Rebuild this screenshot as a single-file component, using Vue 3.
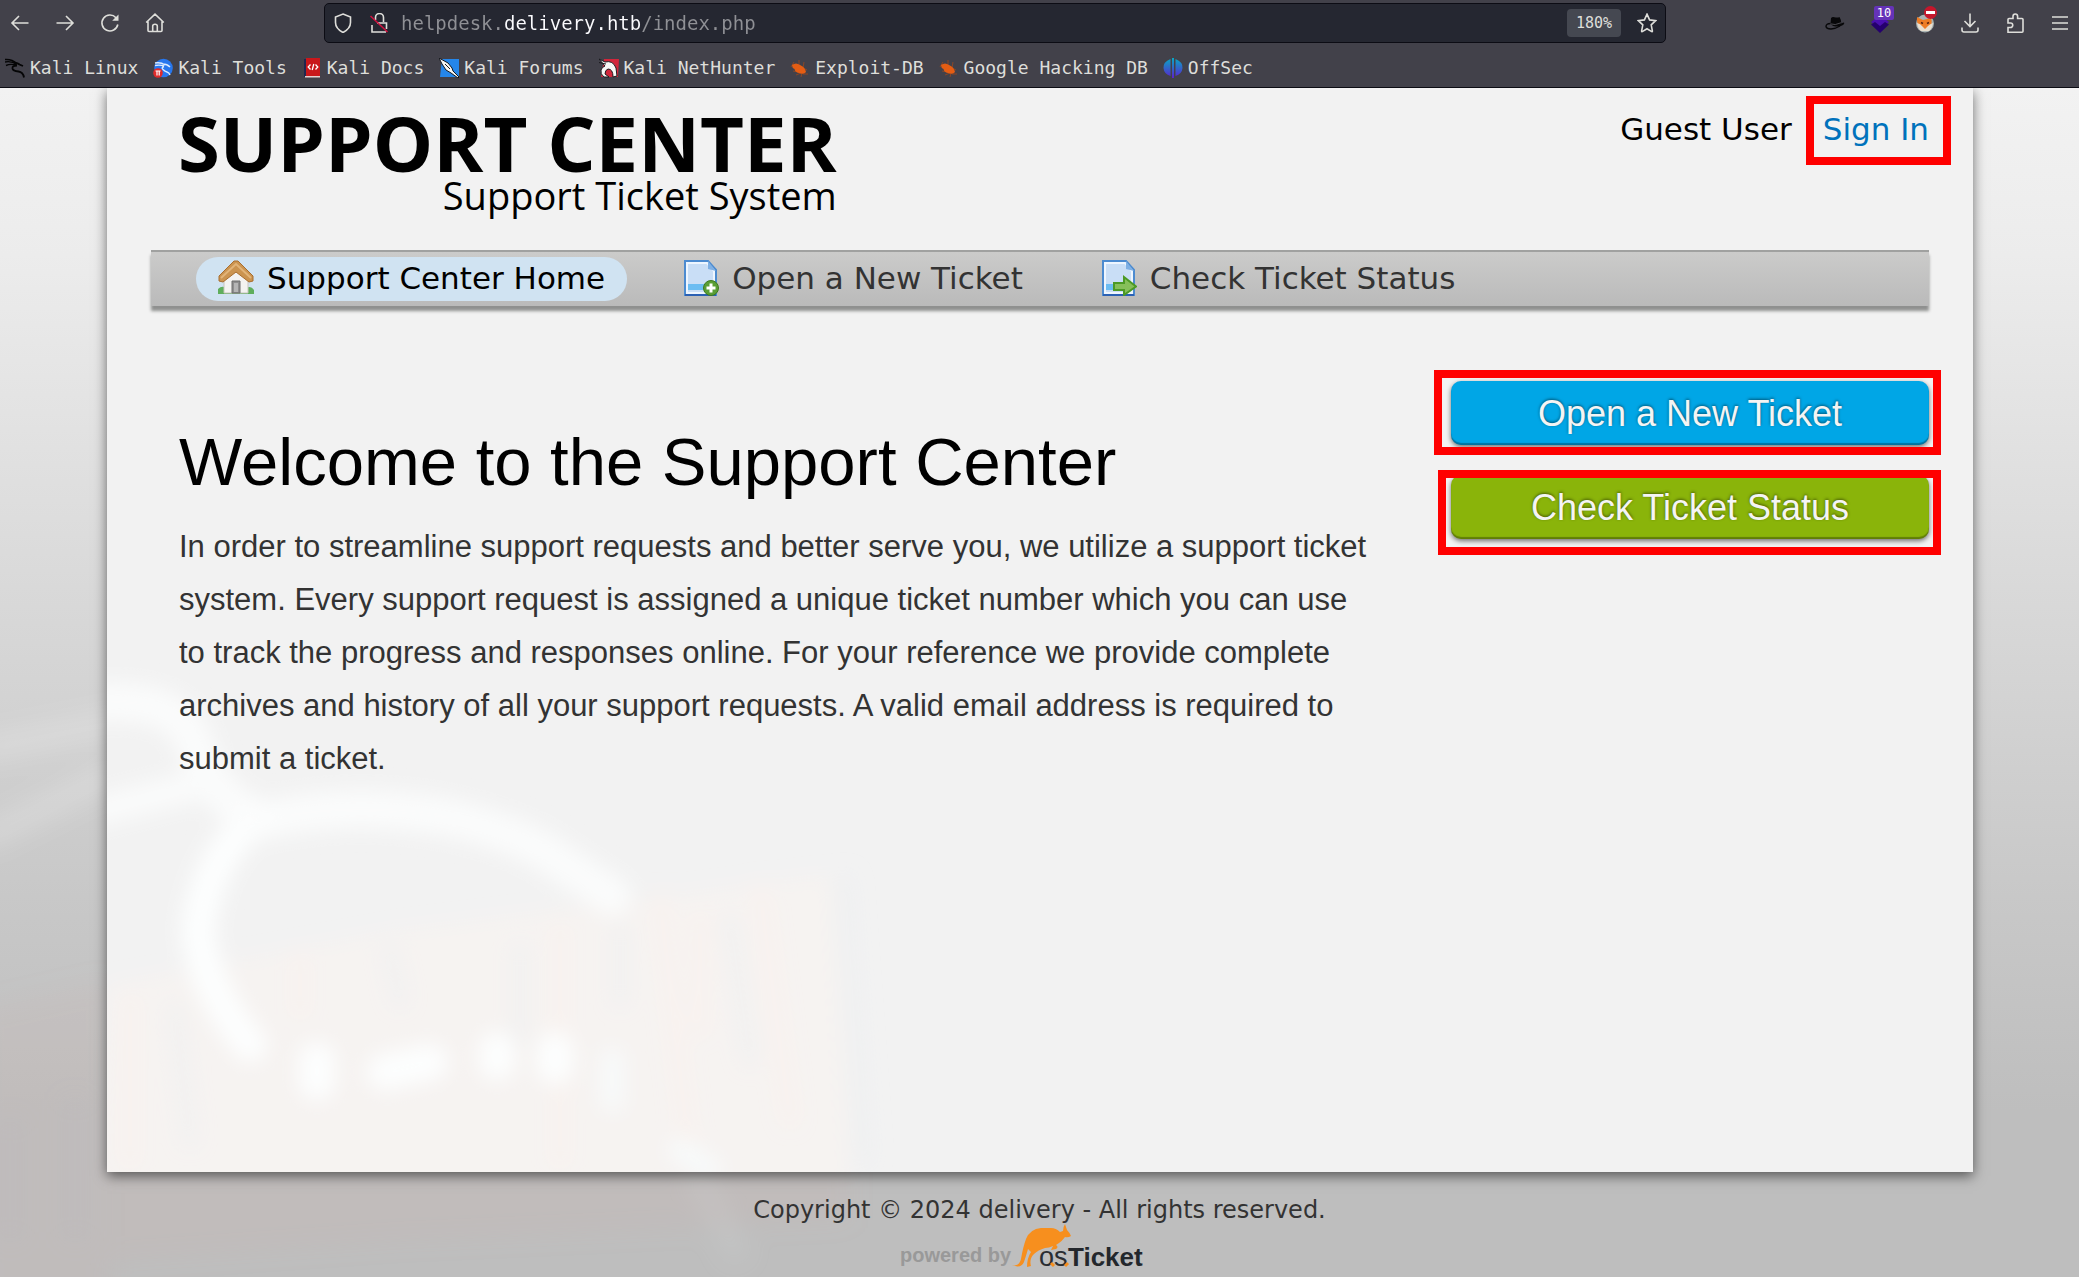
<script setup>
import { ref } from 'vue'

const address = ref('helpdesk.delivery.htb/index.php')

const bookmarks = [
  { id: 'kali', label: 'Kali Linux' },
  { id: 'tools', label: 'Kali Tools' },
  { id: 'docs', label: 'Kali Docs' },
  { id: 'forums', label: 'Kali Forums' },
  { id: 'nethunter', label: 'Kali NetHunter' },
  { id: 'bug', label: 'Exploit-DB' },
  { id: 'bug', label: 'Google Hacking DB' },
  { id: 'offsec', label: 'OffSec' },
]

const tabs = [
  { id: 'home', label: 'Support Center Home', active: true },
  { id: 'new', label: 'Open a New Ticket', active: false },
  { id: 'status', label: 'Check Ticket Status', active: false },
]
</script>

<template>
  <div class="browser">
    <header class="chrome">
      <div class="toolbar">
        <div class="history">
          <button type="button" aria-label="Back">
            <svg viewBox="0 0 20 20"><path d="M18.500 10H2M9 3 2 10l7 7" /></svg>
          </button>
          <button type="button" aria-label="Forward">
            <svg viewBox="0 0 20 20"><path d="M1.500 10H18M11 3l7 7-7 7" /></svg>
          </button>
          <button type="button" aria-label="Reload">
            <svg viewBox="0 0 20 20"><path d="M17.800 11.500A8 8 0 1 1 16 4.700" /><path d="M18.500 1.500v6.300h-6.300z" fill="currentColor" stroke="none" /></svg>
          </button>
          <button type="button" aria-label="Home">
            <svg viewBox="0 0 20 20"><path d="M1.200 9.500 10 1.200l8.800 8.300M3 8.500V17.500q0 1 1 1h12q1 0 1-1V8.500M7.700 18.500V13q0-1.800 2.300-1.800T12.300 13v5.500" /></svg>
          </button>
        </div>

        <form class="urlbar" @submit.prevent>
          <svg class="glyph" viewBox="0 0 20 20"><path d="M10 1 17.500 4v5.500q0 6-7.500 10-7.500-4-7.500-10V4z" /></svg>
          <svg class="glyph" viewBox="0 0 20 20">
            <path d="M6.500 7V4.500a4 4 0 0 1 8 0V9M3 12v7h14M8 10h9.500v6" />
            <path d="M1.500 3 18.500 19" stroke="#d3123f" />
          </svg>
          <input v-model="address" type="text" aria-label="Address" spellcheck="false" />
          <button type="button" class="zoom">180%</button>
          <button type="button" class="star" aria-label="Bookmark this page">
            <svg viewBox="0 0 20 20"><path d="m10 1.200 2.600 5.700 6.100.7-4.500 4.200 1.200 6.300q0 .8-.7.500L10 15.700l-4.700 2.900q-.7.300-.7-.5l1.200-6.300-4.500-4.200 6.100-.7z" /></svg>
          </button>
        </form>

        <div class="extensions">
          <button type="button" aria-label="Hat extension">
            <svg viewBox="0 0 20 20">
              <path d="M5.500 11 6 5.200q1-1.700 3.500-1 3 .8 5-.2 1.500 2 1.800 6.500 3-1.500 3-.5 0 2-5 3.500Q8 14 5.500 11z" fill="#08080a" stroke="none" />
              <path d="M5 10.800q5 2 11-1" stroke="#4b4a50" stroke-width="1" />
              <path d="M5.500 10.500Q1 10.500 1 13.500q.5 2.500 5 2.500 5-.5 9-3" stroke="#08080a" stroke-width="1.400" />
            </svg>
          </button>
          <button type="button" aria-label="Layers extension">
            <svg viewBox="0 0 20 20">
              <path d="m10 2 9 7-9 7-9-7z" fill="#4a0fb0" stroke="none" />
              <path d="M1 11.500 5 9l5 4 5-4 4 2.500L10 20z" fill="#25006e" stroke="none" />
            </svg>
            <span class="count">10</span>
          </button>
          <button type="button" aria-label="Proxy extension">
            <svg viewBox="0 0 20 20">
              <circle cx="10" cy="10.500" r="9" fill="#a9b3b3" stroke="none" />
              <path d="M2 4 8 7l8-2q2 6-2 10l-4 3-4-3Q1 11 2 4z" fill="#ee7d26" stroke="none" />
              <path d="M2 10q4 1 5 3l3 3 3-3q2-2 5-3-1 6-4 8H6q-3-2-4-8z" fill="#e9dfd0" stroke="none" />
              <path d="m6 9.500 2 1M14 9.500l-2 1" stroke="#5a2410" />
            </svg>
            <span class="blocked"></span>
          </button>
          <button type="button" aria-label="Downloads">
            <svg viewBox="0 0 20 20"><path d="M10 .500V13M4.500 8l5.500 5.500L15.500 8M2 14.500v2.500q0 2 2 2h12q2 0 2-2v-2.500" /></svg>
          </button>
          <button type="button" aria-label="Extensions">
            <svg viewBox="0 0 20 20"><path d="M3 19.200v-4.700h2.500a2 2 0 0 0 0-4.500H3V6.500q0-1 1-1h4V3.300a2.300 2.300 0 0 1 4.600 0v2.200H17q1 0 1 1v11.700q0 1-1 1z" /></svg>
          </button>
          <button type="button" aria-label="Menu">
            <svg viewBox="0 0 20 20"><path d="M2 4h16M2 10h16M2 16h16" /></svg>
          </button>
        </div>
      </div>

      <nav class="bookmarks" aria-label="Bookmarks">
        <a v-for="mark in bookmarks" :key="mark.label" href="#">
          <svg v-if="mark.id === 'kali'" viewBox="0 0 20 20" fill="none" stroke="#050506">
            <path d="M0 1.500q7-.5 12 4M0 4q6-1.500 12 2.500M1 7.500q4-2 10-.5" stroke-width="1.400" />
            <path d="M10 5q3 0 4.500 1.500L18 8M12 7.500q-5 0-4.500 3 .5 2.500 6 3 4.500.5 5.500 6" stroke-width="1.800" />
          </svg>
          <svg v-else-if="mark.id === 'tools'" viewBox="0 0 20 20" fill="none">
            <circle cx="10.500" cy="10" r="9.300" fill="#2777ee" />
            <path d="M2 5q6-1 10 2M2 7.500q5-1 9 .5M10 6q4 0 7 3M11 8.500q-3 1-1 3t4 2.500 3 3" stroke="#dcebff" stroke-width="1.400" />
            <circle cx="5" cy="15" r="4.800" fill="#e02b2b" />
            <path d="M2.500 13h5M4 13v4.500M6.200 13v4.500" stroke="#fff" stroke-width="1.200" />
          </svg>
          <svg v-else-if="mark.id === 'docs'" viewBox="0 0 20 20" fill="none">
            <path d="M2 1h3v18H2z" fill="#20274f" />
            <path d="M4 0h14v18H4z" fill="#c9171b" />
            <path d="M3 18h15v1.500H3z" fill="#e6cfcf" />
            <path d="m8.500 6.500-2.300 2.500 2.300 2.500M13.500 6.500l2.300 2.500-2.300 2.500M11.800 6l-1.600 6" stroke="#fff" stroke-width="1.300" />
          </svg>
          <svg v-else-if="mark.id === 'forums'" viewBox="0 0 20 20">
            <path d="M3 1h17v18H1z" fill="#2586ea" />
            <path d="m0 0 9 5 4 5 1 3 6 6-1 1-7-5-5-3-4-6z" fill="#f6f6f4" stroke="#15171c" stroke-width="1" />
            <path d="m6 6 5 5" stroke="#15171c" />
          </svg>
          <svg v-else-if="mark.id === 'nethunter'" viewBox="0 0 20 20" fill="none">
            <path d="M5 1h15l-1 18H2z" fill="#d2263b" />
            <path d="m0 1 6 3q8-2 11 6l1 8-4 1q0-8-5-8-3 1-3 5l4 3H5q-4-3-3-7 1-3 4-4z" fill="#f7f7f5" stroke="#1a1a1e" />
            <path d="M0 4.500 7 6" stroke="#1a1a1e" />
          </svg>
          <svg v-else-if="mark.id === 'bug'" viewBox="0 0 20 20" fill="none">
            <path d="M4 4 1 9M9 2v5M14 4l-1 6M17 12l-4-2M18 16h-5M3 13l5 1M6 17l5-2M11 19l1-4" stroke="#8a4726" stroke-width="1" />
            <path d="M2 7q4-3 8 0 5 2 6 7-2 3-7 1-4-1-4.500-4Q2 10 2 7z" fill="#e55d13" />
          </svg>
          <svg v-else viewBox="0 0 20 20">
            <defs>
              <linearGradient id="offsec-fade" x1="0" y1="0" x2="0" y2="1">
                <stop offset="0" stop-color="#08a9c4" />
                <stop offset="1" stop-color="#5a22cf" />
              </linearGradient>
            </defs>
            <path d="M7.500 1v17Q1 16 .5 10T7.500 1zM12.500 1v17q6.500-2 7-8t-7-9zM9 0h2v20H9z" fill="url(#offsec-fade)" />
          </svg>
          <span>{{ mark.label }}</span>
        </a>
      </nav>
    </header>

    <div class="page">
      <svg class="backdrop" viewBox="0 0 1000 637" aria-hidden="true">
        <defs>
          <filter id="haze" x="-20%" y="-20%" width="140%" height="140%"><feGaussianBlur stdDeviation="12" /></filter>
        </defs>
        <g filter="url(#haze)" fill="none">
          <path d="M-20 200 120 130M-20 110 130 80" stroke="#fff" stroke-opacity=".2" stroke-width="26" />
          <path d="M-20 370 110 340V660H-20z" fill="#d0b0a4" fill-opacity=".12" />
          <path d="M110 530H850V580L400 600 110 620z" fill="#d8a89a" fill-opacity=".1" />
          <path d="M10 480V600M75 460V600" stroke="#b4babf" stroke-opacity=".2" stroke-width="20" />
          <path d="M690 520 740 620" stroke="#dfe2e2" stroke-opacity=".15" stroke-width="22" />
        </g>
      </svg>

      <div class="card">
        <svg class="watermark" viewBox="107 640 1000 532" aria-hidden="true">
          <defs>
            <filter id="soft" x="-20%" y="-20%" width="140%" height="140%"><feGaussianBlur stdDeviation="10" /></filter>
          </defs>
          <g filter="url(#soft)" fill="none" stroke-linecap="round">
            <path d="M107 985 400 930 600 905 830 875 850 1190H90z" fill="#fff4f0" fill-opacity=".3" />
            <path d="M130 1000V1160M300 960V1010M560 930V1160M660 900 690 1160M760 890 790 1120M700 920V1030" stroke="#ffeee8" stroke-opacity=".3" stroke-width="16" />
            <path d="M175 1010 190 1140M390 950 400 1000M520 950V1040M730 920 750 1060M845 880 865 1160M620 930V1000" stroke="#eceeef" stroke-opacity=".5" stroke-width="14" />
            <path d="M255 819Q205 860 198 932 205 990 250 1045" stroke="#fdfefe" stroke-width="34" />
            <path d="M70 705Q180 690 195 745 215 805 265 820 350 800 446 817 500 828 542 850L612 896" stroke="#fcfdfd" stroke-opacity=".9" stroke-width="38" />
            <path d="M80 815 200 785" stroke="#fafbfb" stroke-width="30" />
            <path d="M317 1060V1082M385 1072 430 1062M497 1050V1062M555 1050V1066" stroke="#fdfefe" stroke-width="36" />
            <path d="M612 1060V1100M680 1150 710 1170" stroke="#f8fafa" stroke-width="24" />
          </g>
        </svg>

        <header class="masthead">
          <a class="logo" href="#">
            <span class="logo-title">SUPPORT CENTER</span>
            <span class="logo-tagline">Support Ticket System</span>
          </a>
          <p class="account">
            <span>Guest User</span>
            <a href="#">Sign In<i class="mark mark-signin"></i></a>
          </p>
        </header>

        <nav class="tabs" aria-label="Support center">
          <a v-for="tab in tabs" :key="tab.id" href="#" :class="{ active: tab.active }">
            <svg v-if="tab.id === 'home'" viewBox="0 0 36 36">
              <path d="M0 29q4-4 8-1h20q5-3 8 2v4H0z" fill="#5fae5c" />
              <path d="M6 16 18 5l12 11v17H6z" fill="#f4f3f1" stroke="#c9c4be" />
              <path d="M14 21h8v12h-8z" fill="#8f8f8f" stroke="#6d6d6d" />
              <path d="M16 23h4v9h-4z" fill="#b5b5b5" />
              <path d="M16 1h4l15 15v5l-4 1L18 12 5 22l-4-1v-5z" fill="#cb9450" stroke="#a96e2e" />
              <path d="M3 18 18 4l15 14" fill="none" stroke="#e2b478" stroke-width="2" />
            </svg>
            <svg v-else viewBox="0 0 36 36">
              <path d="M2 1h23l8 9v25H2z" fill="#c9def6" stroke="#4c8bd0" stroke-width="2" />
              <path d="M4 3h20l7 8v22H4z" fill="none" stroke="#eef6ff" stroke-width="2" />
              <path d="M5 24h25v6H5z" fill="#6cbdf2" />
              <path d="M2 35h31" stroke="#2b61b4" stroke-width="2" />
              <path d="M25 1v8l8 2z" fill="#7fb0e4" />
              <template v-if="tab.id === 'new'">
                <circle cx="28" cy="28" r="7.500" fill="#5a9e35" stroke="#3d7a1f" />
                <path d="M28 23.500v9M23.500 28h9" stroke="#fff" stroke-width="3" />
              </template>
              <path v-else d="M13 23h10v-6l12 9.500L23 35v-5H13z" fill="#86bf5a" stroke="#4c9a25" stroke-width="2" />
            </svg>
            <span>{{ tab.label }}</span>
          </a>
        </nav>

        <main class="content">
          <section class="welcome">
            <h1>Welcome to the Support Center</h1>
            <p>
              In order to streamline support requests and better serve you, we utilize a support ticket
              system. Every support request is assigned a unique ticket number which you can use to track
              the progress and responses online. For your reference we provide complete archives and
              history of all your support requests. A valid email address is required to submit a ticket.
            </p>
          </section>
          <aside class="actions">
            <a class="action blue" href="#">Open a New Ticket<i class="mark mark-open"></i></a>
            <a class="action green" href="#">Check Ticket Status<i class="mark mark-check"></i></a>
          </aside>
        </main>
      </div>

      <footer class="footer">
        <p>Copyright © 2024 delivery - All rights reserved.</p>
        <a href="#" aria-label="powered by osTicket">
          <svg viewBox="0 0 280 44">
            <text x="0" y="38" class="powered">powered by</text>
            <path
              d="M112 41q7 2 9-6 2-12 5-20 4-10 15-11h10q5 0 9 4l3-1q0-4 2-7l2 6q3 3 4 6-3 2-6 1-3 4-6 6l-3 2q3 2 0 4l-5 1 2-4q-4 2-8 2-7 2-11 6-5 5-3 12l-4 1q0-9 4-15l-3-3q-2 7-4 13-3 7-12 3z"
              fill="#f78f1e"
            />
            <text x="139" y="42" class="os">os</text>
            <text x="168" y="42" class="ticket">Ticket</text>
            <path d="M151 39l3 3M168 39l-3 3" stroke="#f78f1e" stroke-width="3" />
          </svg>
        </a>
      </footer>
    </div>
  </div>
</template>

<style>
body {
  margin: 0;
}
</style>

<style scoped>
.browser {
  display: flex;
  flex-direction: column;
  min-height: 100vh;
  font-family: "DejaVu Sans", sans-serif;
  color: #000;
}

a {
  color: inherit;
  text-decoration: none;
}

p,
h1 {
  margin: 0;
}

button {
  padding: 0;
  border: 0;
  background: none;
  color: inherit;
  font: inherit;
}

/* Browser chrome */
.chrome {
  background: #42414a;
  border-bottom: 1px solid #0c0c14;
  color: #dededa;
  font-family: "DejaVu Sans Mono", monospace;
}

.toolbar {
  display: flex;
  align-items: center;
  height: 46px;
  padding: 0 9px 0 10px;
}

.toolbar svg {
  display: block;
  width: 20px;
  height: 20px;
  fill: none;
  stroke: currentColor;
  stroke-width: 1.6;
}

.history,
.extensions {
  display: flex;
  gap: 25px;
}

.urlbar {
  display: flex;
  flex: 1;
  align-items: center;
  gap: 16px;
  box-sizing: border-box;
  height: 40px;
  margin: 0 159px;
  padding: 0 8px;
  border: 1px solid #0c0c14;
  border-radius: 5px;
  background: #252731;
}

.urlbar input {
  flex: 1;
  min-width: 0;
  margin-left: -4px;
  padding: 0;
  border: 0;
  outline: 0;
  font: 19px/36px "DejaVu Sans Mono", monospace;
  color: transparent;
  background: linear-gradient(90deg, #8f9095 9ch, #fbfbfe 9ch 21ch, #8f9095 21ch);
  -webkit-background-clip: text;
  background-clip: text;
}

.zoom {
  height: 28px;
  padding: 0 9px;
  border-radius: 4px;
  background: #454851;
  font-size: 15px;
}

.extensions button {
  position: relative;
}

.count,
.blocked {
  position: absolute;
  top: -7px;
  left: 4px;
  width: 20px;
  height: 14px;
  border-radius: 2px;
  background: #6533b8;
  color: #fff;
  font-size: 12px;
  line-height: 14px;
}

.blocked {
  left: 9px;
  width: 13px;
  height: 13px;
  border-radius: 50%;
  background: linear-gradient(#fff, #fff) center / 9px 3px no-repeat #c4172c;
}

.bookmarks {
  display: flex;
  gap: 15px;
  height: 38px;
  padding: 3px 5px 0;
  font-size: 18px;
  line-height: 38px;
  white-space: nowrap;
}

.bookmarks a {
  display: flex;
  align-items: center;
  gap: 5px;
}

.bookmarks svg {
  width: 20px;
  height: 20px;
}

/* Page */
.page {
  position: relative;
  display: flex;
  flex: 1;
  flex-direction: column;
  overflow: hidden;
  background: linear-gradient(#f2f2f2, #ececec 14%, #d9d9d9 42%, #c8c8c8 68%, #bebebe 86%, #bebebe);
}

.backdrop {
  position: absolute;
  bottom: 0;
  left: 0;
  width: 1000px;
}

.card {
  position: relative;
  flex: 1;
  margin: 0 106px 0 107px;
  padding: 0 44px;
  background: #f2f2f2;
  box-shadow: 0 4px 12px rgba(0, 0, 0, 0.55);
}

.watermark {
  position: absolute;
  bottom: 0;
  left: 0;
  width: 1000px;
}

.masthead {
  position: relative;
  display: flex;
  justify-content: space-between;
  align-items: flex-start;
  box-sizing: border-box;
  height: 162px;
  padding: 17px 0 0 27px;
}

.logo {
  display: flex;
  flex-direction: column;
  align-items: flex-end;
  font-family: "Open Sans", sans-serif;
}

.logo-title {
  font-size: 76px;
  font-weight: 700;
  line-height: 76px;
}

.logo-tagline {
  font-size: 38px;
  line-height: 28px;
}

.account {
  display: flex;
  gap: 31px;
  padding-top: 6px;
  font-size: 31px;
  line-height: 36px;
}

.account a {
  position: relative;
  color: #0072bc;
}

/* Red highlight frames */
.mark {
  position: absolute;
  border: 8px solid #f00;
}

.mark-signin {
  inset: -15px -22px -18px -17px;
}

.mark-open {
  inset: -11px -12px -10px -17px;
}

.mark-check {
  inset: -5px -12px -16px -13px;
}

.tabs {
  position: relative;
  display: flex;
  align-items: center;
  gap: 34px;
  box-sizing: border-box;
  height: 56px;
  padding: 0 45px;
  border-top: 2px solid #a0a1a0;
  background: linear-gradient(#cbcbca, #bababa);
  box-shadow: 0 5px 3px #8f908f;
  color: #333;
  font-size: 31px;
  line-height: 42px;
}

.tabs a {
  display: flex;
  align-items: center;
  gap: 13px;
  padding: 0 22px 2px;
  border-radius: 22px;
}

.tabs a.active {
  background: #d0e3f2;
  color: #000;
}

.tabs svg {
  width: 36px;
  height: 36px;
}

.content {
  position: relative;
  display: grid;
  grid-template-columns: 1fr 478px;
  gap: 72px;
  padding: 75px 0 40px 28px;
  font-family: "Liberation Sans", Arial, sans-serif;
}

.welcome {
  padding-top: 43px;
}

.welcome h1 {
  margin-bottom: 20px;
  font-size: 67px;
  font-weight: 400;
  line-height: 76px;
}

.welcome p {
  color: #333;
  font-size: 31px;
  line-height: 53px;
}

.actions {
  display: flex;
  flex-direction: column;
  gap: 30px;
}

.action {
  position: relative;
  padding-top: 2px;
  border-radius: 10px;
  color: #f4f4f4;
  font-size: 36px;
  line-height: 62px;
  text-align: center;
  text-shadow: 0 -1px 3px rgba(0, 0, 0, 0.5);
  box-shadow: 0 2px 5px rgba(0, 0, 0, 0.55), inset 0 -2px 1px rgba(0, 0, 0, 0.3);
}

.blue {
  background: #00a6e6;
}

.green {
  background: #8ab40a;
}

.footer {
  position: relative;
  display: flex;
  flex-direction: column;
  align-items: center;
  padding: 24px 0 9px;
  color: #333;
  font-size: 24px;
  line-height: 28px;
}

.footer a {
  display: flex;
}

.footer svg {
  width: 280px;
  height: 44px;
}

.powered {
  fill: #999;
  font: 700 20px "Liberation Sans", Arial, sans-serif;
}

.os {
  fill: #2a2d32;
  font: 27px "Liberation Sans", Arial, sans-serif;
}

.ticket {
  fill: #23272c;
  font: 700 26px "Liberation Sans", Arial, sans-serif;
}
</style>
